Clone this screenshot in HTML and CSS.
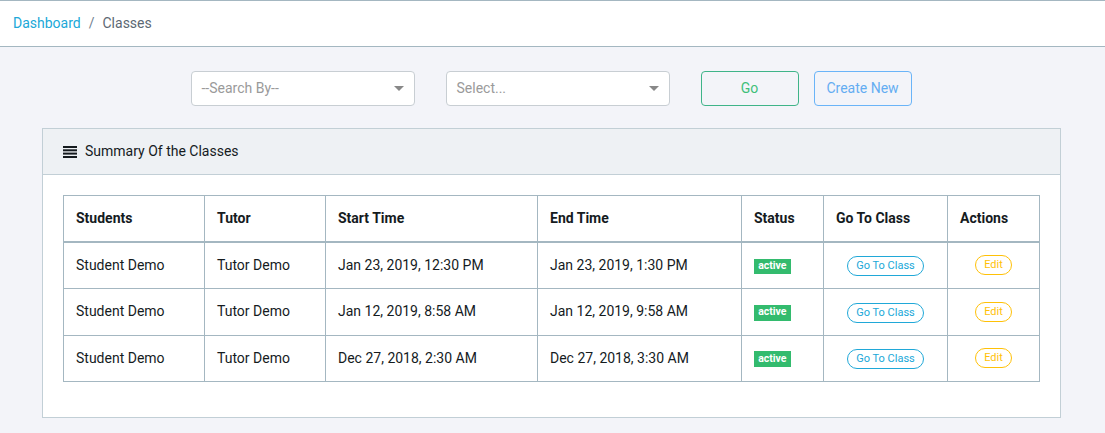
FILE: index.html
```html
<!DOCTYPE html>
<html>
<head>
<meta charset="utf-8">
<link rel="stylesheet" href="styles.css">
</head>
<body>
<nav class="crumbs">
  <a class="crumb-link" href="#">Dashboard</a><span class="crumb-sep">/</span><span class="crumb-current">Classes</span>
</nav>
<div class="filters">
  <div class="select select-first"><span class="placeholder">--Search By--</span><span class="caret"></span></div>
  <div class="select"><span class="placeholder">Select...</span><span class="caret"></span></div>
  <button class="btn btn-go">Go</button>
  <button class="btn btn-new">Create New</button>
</div>
<div class="page">
  <section class="card">
    <header class="card-header">
      <svg class="icon" width="14" height="12" viewBox="0 0 14 12"><rect x="0" y="0" width="14" height="2" fill="#151b1e"/><rect x="0" y="3.3" width="14" height="2" fill="#151b1e"/><rect x="0" y="6.6" width="14" height="2" fill="#151b1e"/><rect x="0" y="10" width="14" height="2" fill="#151b1e"/></svg>
      <span>Summary Of the Classes</span>
    </header>
    <div class="card-body">
      <table class="grid">
        <colgroup>
          <col class="c1"><col class="c2"><col class="c3"><col class="c4"><col class="c5"><col class="c6"><col class="c7">
        </colgroup>
        <thead>
          <tr><th>Students</th><th>Tutor</th><th>Start Time</th><th>End Time</th><th>Status</th><th>Go To Class</th><th>Actions</th></tr>
        </thead>
        <tbody>
          <tr><td>Student Demo</td><td>Tutor Demo</td><td>Jan 23, 2019, 12:30 PM</td><td>Jan 23, 2019, 1:30 PM</td><td><span class="badge">active</span></td><td class="center"><span class="pill pill-blue">Go To Class</span></td><td class="center"><span class="pill pill-yellow">Edit</span></td></tr>
          <tr><td>Student Demo</td><td>Tutor Demo</td><td>Jan 12, 2019, 8:58 AM</td><td>Jan 12, 2019, 9:58 AM</td><td><span class="badge">active</span></td><td class="center"><span class="pill pill-blue">Go To Class</span></td><td class="center"><span class="pill pill-yellow">Edit</span></td></tr>
          <tr><td>Student Demo</td><td>Tutor Demo</td><td>Dec 27, 2018, 2:30 AM</td><td>Dec 27, 2018, 3:30 AM</td><td><span class="badge">active</span></td><td class="center"><span class="pill pill-blue">Go To Class</span></td><td class="center"><span class="pill pill-yellow">Edit</span></td></tr>
        </tbody>
      </table>
    </div>
  </section>
</div>
</body>
</html>
```
FILE: styles.css
```css
* { box-sizing: border-box; }
html, body { margin: 0; padding: 0; }
body {
  background: #f3f4f9;
  font-family: Roboto, "Liberation Sans", sans-serif;
  font-size: 14px;
  line-height: 21px;
  color: #151b1e;
}
.crumbs {
  background: #fff;
  border-top: 1px solid #a4b7c1;
  border-bottom: 1px solid #a4b7c1;
  padding: 12px 13px;
  height: 47px;
  display: flex;
}
.crumb-link { color: #20a8d8; text-decoration: none; }
.crumb-sep { color: #73818f; padding: 0 8px 0 8px; }
.crumb-current { color: #5c6873; }

.filters {
  display: flex;
  justify-content: center;
  margin: 24px 0 22px;
  padding-right: 3px;
}
.select {
  width: 224px;
  height: 35px;
  background: #fff;
  border: 1px solid #c8ced3;
  border-radius: 4px;
  display: flex;
  align-items: center;
  justify-content: space-between;
  padding: 0 10px 0 10px;
  margin-right: 31px;
}
.placeholder { color: #9a9a9a; }
.caret {
  width: 0; height: 0;
  border-left: 5px solid transparent;
  border-right: 5px solid transparent;
  border-top: 5px solid #888;
}
.btn {
  width: 98px;
  height: 35px;
  font: inherit;
  border-radius: 4px;
  background: transparent;
  padding: 0;
}
.btn-go { border: 1px solid #3fb489; color: #3fbf7a; margin-right: 15px; }
.btn-new { border: 1px solid #6ab4f8; color: #63adf2; }

.page { padding: 0 44px 0 42px; }
.card {
  background: #fff;
  border: 1px solid #c2cfd6;
}
.card-header {
  background: #eef1f4;
  border-bottom: 1px solid #c2cfd6;
  padding: 12px 20px;
  display: flex;
  align-items: center;
  gap: 8px;
}
.icon { display: block; }
.card-body { padding: 20px 20px 19px; }
.grid {
  width: 100%;
  border-collapse: collapse;
  table-layout: fixed;
  margin-bottom: 16px;
}
.c1 { width: 141px; }
.c2 { width: 121px; }
.c3 { width: 212px; }
.c4 { width: 204px; }
.c5 { width: 82px; }
.c6 { width: 124px; }
.c7 { width: 92px; }
.grid th, .grid td {
  border: 1px solid #a4b7c1;
  padding: 12px 12px;
  text-align: left;
  vertical-align: middle;
  white-space: nowrap;
}
.grid th { font-weight: 700; border-bottom-width: 2px; }
.grid td.center { text-align: center; }
.badge {
  display: inline-block;
  background: #33bb6e;
  color: #fff;
  font-size: 10.5px;
  font-weight: 700;
  line-height: 1;
  padding: 2.6px 4.2px;
  vertical-align: 1px;
}
.pill {
  display: inline-block;
  height: 20px;
  line-height: 18px;
  font-size: 11px;
  border-radius: 10px;
  padding: 0 8px;
  vertical-align: middle;
}
.pill-blue { border: 1px solid #20a8d8; color: #20a8d8; }
.pill-yellow { border: 1px solid #ffc107; color: #ffc107; position: relative; top: -1px; }
```
